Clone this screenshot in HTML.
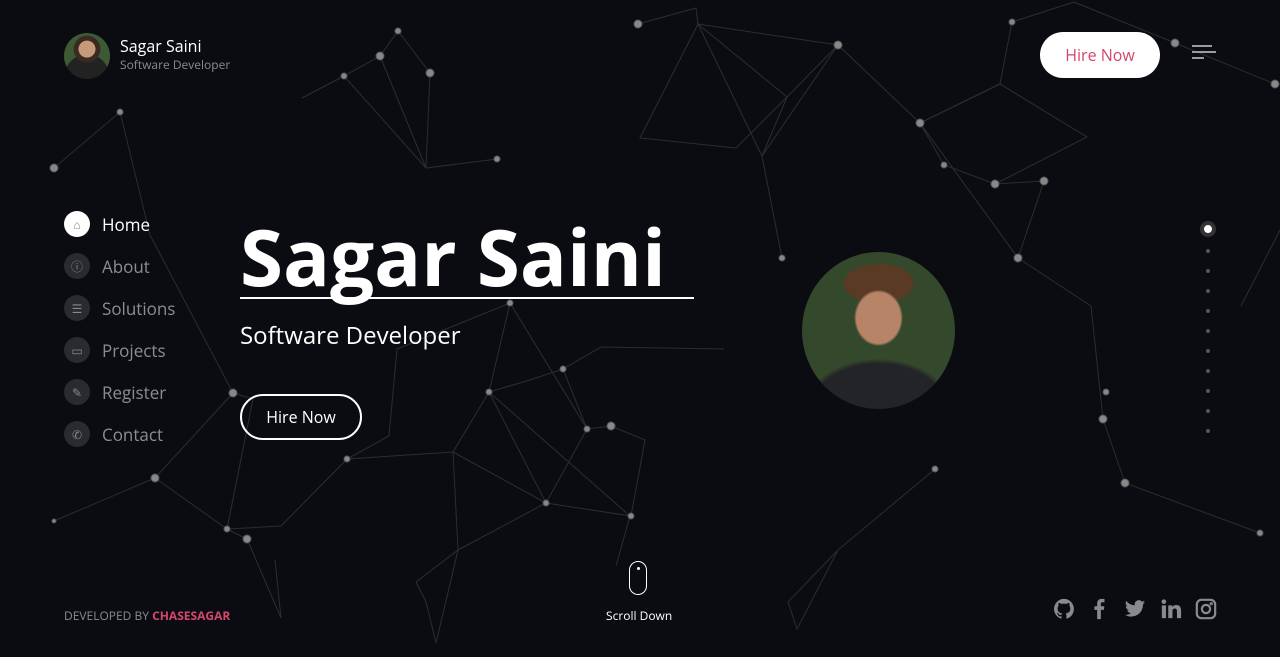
<!DOCTYPE html>
<html><head><meta charset="utf-8"><style>
*{margin:0;padding:0;box-sizing:border-box}
body{width:1280px;height:657px;overflow:hidden;background:#0b0c11;font-family:"Open Sans","Liberation Sans",sans-serif;color:#fff;position:relative}
svg.net{position:absolute;left:0;top:0}
.brand{position:absolute;left:64px;top:33px;display:flex;align-items:center}
.av{width:46px;height:46px;border-radius:50%;background:radial-gradient(circle at 50% 35%,#c79a7a 0 22%,#3a2a22 23% 35%,transparent 36%),radial-gradient(circle at 50% 95%,#222 0 45%,transparent 46%),#3d5a35}
.brand .n{margin-left:10px;margin-top:-4px}
.brand .t1{font-size:16px;line-height:22px}
.brand .t2{font-size:12px;color:#8a8b90;line-height:16px}
.hire{position:absolute;left:1040px;top:32px;width:120px;height:46px;border-radius:23px;background:#fff;color:#d5466b;font-size:16px;text-align:center;line-height:46px}
.burger{position:absolute;left:1192px;top:45px}
.burger i{display:block;height:2px;background:#9a9aa0;margin-bottom:4px}
.nav{position:absolute;left:64px;top:203px}
.nav div{display:flex;align-items:center;height:42px;font-size:17px;color:#8c8d92}
.nav span.c{width:26px;height:26px;border-radius:50%;background:#2a2b30;margin-right:12px;display:flex;align-items:center;justify-content:center;color:#888;font-size:12px}
.nav div.a{color:#fff}.nav div.a span.c{background:#fff}
h1{position:absolute;left:240px;top:208px;font-size:78px;font-weight:bold;letter-spacing:0;line-height:96px}
.ul{position:absolute;left:240px;top:297px;width:454px;height:2px;background:#fff}
.sub{position:absolute;left:240px;top:319px;font-size:24px}
.hb{position:absolute;left:240px;top:394px;width:122px;height:46px;border:2px solid #fff;border-radius:23px;font-size:16px;text-align:center;line-height:42px}
.photo{position:absolute;left:802px;top:252px;width:153px;height:157px;border-radius:50%;background:radial-gradient(ellipse 16% 18% at 50% 42%,#b88468 0 90%,transparent 100%),radial-gradient(ellipse 24% 13% at 50% 20%,#5a3a25 0 90%,transparent 100%),radial-gradient(ellipse 48% 32% at 50% 100%,#222428 0 90%,transparent 100%),#34482c}
.dots{position:absolute;left:1200px;top:221px}
.dots i{display:block;width:4px;height:4px;border-radius:50%;background:#555;margin:0 0 16px 6px}
.dots i.a{width:16px;height:16px;margin:0 0 12px 0;background:#fff;border:4px solid #333}
.dev{position:absolute;left:64px;top:607px;font-size:12px;color:#8a8b90}
.dev b{color:#d5466b}
.mouse{position:absolute;left:629px;top:561px;width:18px;height:34px;border:1px solid #fff;border-radius:9px}
.mouse i{position:absolute;left:7px;top:5px;width:3px;height:3px;background:#fff;border-radius:50%}
.sd{position:absolute;left:606px;top:607px;font-size:12px}
.soc{position:absolute;left:1053px;top:598px;display:flex;gap:13px}
</style></head><body>
<svg class="net" width="1280" height="657" stroke="#555" stroke-width="1" fill="#888">
<g opacity=".45">
<polyline fill="none" points="54,168 120,112 150,235 233,393 155,478 54,521"/>
<polyline fill="none" points="302,98 344,76 380,56 398,31 430,73 426,168 497,159"/>
<polyline fill="none" points="344,76 426,168 380,56"/>
<polyline fill="none" points="638,24 696,8 698,24 640,138 736,148 787,97 838,45 920,123 1000,84 1012,22 1074,2 1175,43 1275,84"/>
<polyline fill="none" points="698,24 762,156 787,97 698,24 838,45 762,156 782,258"/>
<polyline fill="none" points="920,123 944,165 995,184 1044,181 1018,258 920,123 1000,84 1087,137 995,184"/>
<polyline fill="none" points="1018,258 1091,306 1103,419 1125,483 1260,533"/>
<polyline fill="none" points="510,303 489,392 530,380 563,369 601,347 724,349"/>
<polyline fill="none" points="489,392 453,452 347,459 389,436 397,349 510,303 587,429 611,426 645,440 631,516 546,503 453,452"/>
<polyline fill="none" points="563,369 587,429 546,503 489,392 630,516 616,566"/>
<polyline fill="none" points="347,459 281,526 227,529 247,539 281,618 275,560"/>
<polyline fill="none" points="453,452 458,550 416,582 426,602 436,643 458,550 546,503"/>
<polyline fill="none" points="233,393 253,399 227,529 155,478"/>
<polyline fill="none" points="935,469 838,550 788,602 797,629 838,550"/>
<polyline fill="none" points="1241,306 1280,230"/>
</g>
<g fill="#888"><circle cx="54" cy="168" r="4"/><circle cx="120" cy="112" r="3"/><circle cx="344" cy="76" r="3"/><circle cx="380" cy="56" r="4"/><circle cx="398" cy="31" r="3"/><circle cx="430" cy="73" r="4"/><circle cx="497" cy="159" r="3"/><circle cx="638" cy="24" r="4"/><circle cx="838" cy="45" r="4"/><circle cx="920" cy="123" r="4"/><circle cx="944" cy="165" r="3"/><circle cx="995" cy="184" r="4"/><circle cx="1044" cy="181" r="4"/><circle cx="1012" cy="22" r="3"/><circle cx="1175" cy="43" r="4"/><circle cx="1275" cy="84" r="4"/><circle cx="1018" cy="258" r="4"/><circle cx="1103" cy="419" r="4"/><circle cx="1106" cy="392" r="3"/><circle cx="1125" cy="483" r="4"/><circle cx="1260" cy="533" r="3"/><circle cx="935" cy="469" r="3"/><circle cx="782" cy="258" r="3"/><circle cx="510" cy="303" r="3"/><circle cx="563" cy="369" r="3"/><circle cx="489" cy="392" r="3"/><circle cx="587" cy="429" r="3"/><circle cx="611" cy="426" r="4"/><circle cx="546" cy="503" r="3"/><circle cx="631" cy="516" r="3"/><circle cx="347" cy="459" r="3"/><circle cx="233" cy="393" r="4"/><circle cx="155" cy="478" r="4"/><circle cx="227" cy="529" r="3"/><circle cx="247" cy="539" r="4"/><circle cx="54" cy="521" r="2"/></g>
</svg>
<div class="brand"><div class="av"></div><div class="n"><div class="t1">Sagar Saini</div><div class="t2">Software Developer</div></div></div>
<div class="hire">Hire Now</div>
<div class="burger"><i style="width:20px"></i><i style="width:24px"></i><i style="width:12px"></i></div>
<div class="nav">
<div class="a"><span class="c">⌂</span>Home</div>
<div><span class="c">ⓘ</span>About</div>
<div><span class="c">☰</span>Solutions</div>
<div><span class="c">▭</span>Projects</div>
<div><span class="c">✎</span>Register</div>
<div><span class="c">✆</span>Contact</div>
</div>
<h1>Sagar Saini</h1><div class="ul"></div>
<div class="sub">Software Developer</div>
<div class="hb">Hire Now</div>
<div class="photo"></div>
<div class="dots"><i class="a"></i><i></i><i></i><i></i><i></i><i></i><i></i><i></i><i></i><i></i><i></i></div>
<div class="dev">DEVELOPED BY <b>CHASESAGAR</b></div>
<div class="mouse"><i></i></div><div class="sd">Scroll Down</div>
<div class="soc">
<svg width="22" height="22" viewBox="0 0 24 24" fill="#8a8a8e"><path d="M12 1a11 11 0 0 0-3.5 21.4c.6.1.8-.2.8-.5v-2c-3.1.7-3.7-1.4-3.7-1.4-.5-1.3-1.2-1.6-1.2-1.6-1-.7.1-.7.1-.7 1.1.1 1.700 1.1 1.7 1.1 1 1.7 2.6 1.2 3.2.9.1-.7.4-1.2.7-1.5-2.5-.3-5.1-1.200-5.1-5.4 0-1.2.4-2.2 1.1-3-.1-.3-.5-1.4.1-2.9 0 0 .9-.3 3 1.1a10 10 0 0 1 5.5 0c2.1-1.4 3-1.1 3-1.1.6 1.5.2 2.6.1 2.9.7.8 1.1 1.8 1.1 3 0 4.2-2.6 5.1-5.1 5.4.4.4.8 1.1.8 2.1v3.1c0 .3.2.6.8.5A11 11 0 0 0 12 1z"/></svg>
<svg width="22" height="22" viewBox="0 0 24 24" fill="#8a8a8e"><path d="M14 23V13h3.3l.5-4H14V6.6c0-1.1.3-1.9 1.9-1.9H18V1.2C17.6 1.1 16.4 1 15 1c-3 0-5 1.8-5 5.1V9H7v4h3v10z"/></svg>
<svg width="24" height="22" viewBox="0 0 24 24" fill="#8a8a8e"><path d="M23 4.6a9 9 0 0 1-2.6.7 4.5 4.5 0 0 0 2-2.5 9 9 0 0 1-2.9 1.1 4.5 4.5 0 0 0-7.7 4.1A12.8 12.8 0 0 1 2.5 3.3a4.5 4.5 0 0 0 1.4 6 4.5 4.5 0 0 1-2-.6 4.5 4.5 0 0 0 3.6 4.5 4.5 4.5 0 0 1-2 .1 4.5 4.5 0 0 0 4.2 3.1A9 9 0 0 1 1 18.3a12.8 12.8 0 0 0 19.7-11.4A9 9 0 0 0 23 4.6z"/></svg>
<svg width="22" height="22" viewBox="0 0 24 24" fill="#8a8a8e"><path d="M2 8h4.5v14H2zM4.2 1.5a2.5 2.5 0 1 1 0 5 2.5 2.5 0 0 1 0-5zM9 8h4.3v2c.6-1.1 2.1-2.3 4.3-2.3 4.6 0 5.4 3 5.4 6.9V22h-4.5v-6.8c0-1.6 0-3.7-2.3-3.7s-2.6 1.8-2.6 3.6V22H9z"/></svg>
<svg width="22" height="22" viewBox="0 0 24 24" fill="none" stroke="#8a8a8e" stroke-width="2.4"><rect x="2" y="2" width="20" height="20" rx="5"/><circle cx="12" cy="12" r="4.5"/><circle cx="17.7" cy="6.3" r=".6" fill="#8a8a8e"/></svg>
</div>
</body></html>
